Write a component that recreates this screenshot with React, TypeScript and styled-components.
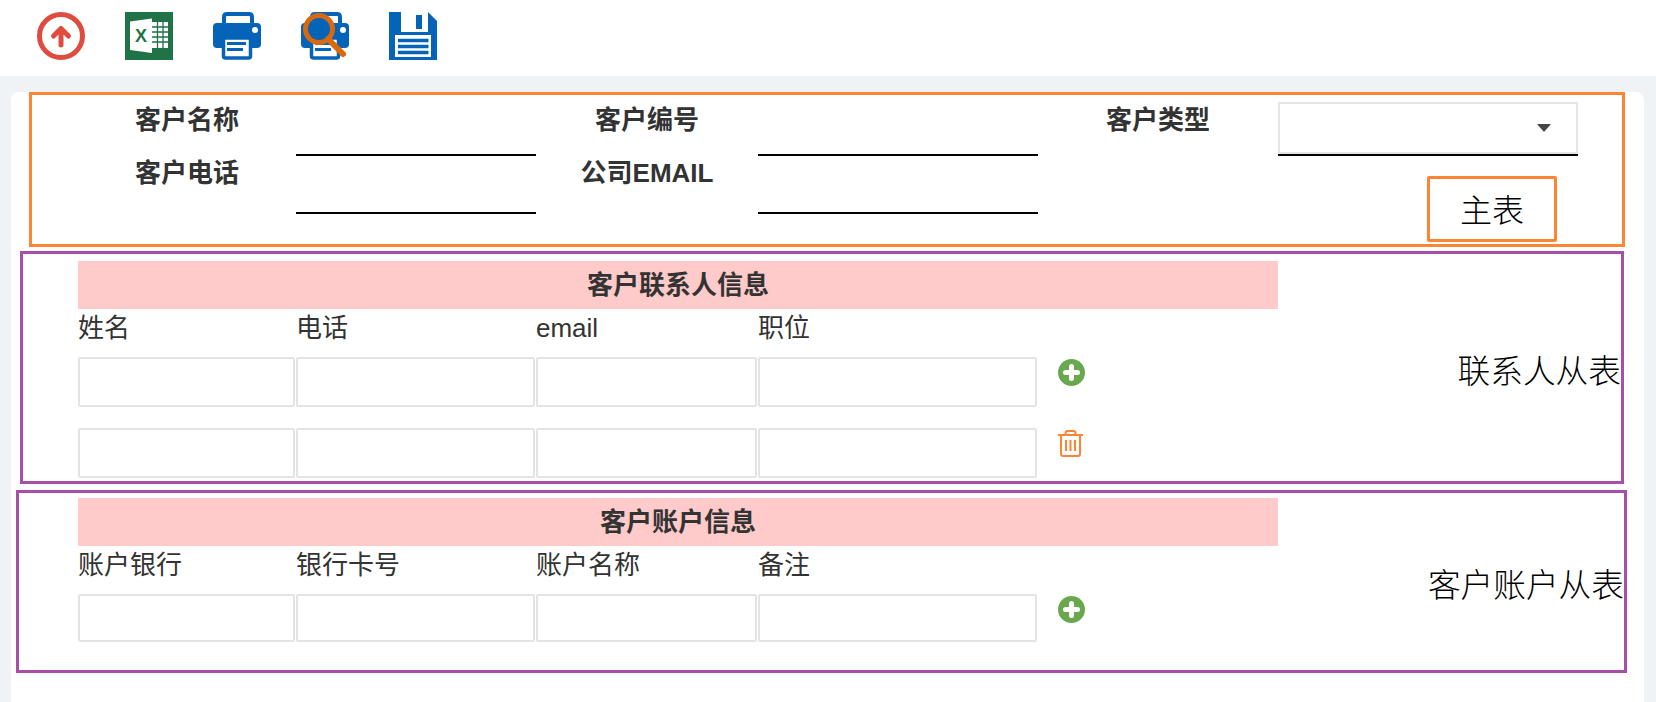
import { FC } from 'react';
import styled, { createGlobalStyle } from 'styled-components';

const contactLabels = ['姓名', '电话', 'email', '职位'];
const accountLabels = ['账户银行', '银行卡号', '账户名称', '备注'];

const UploadIcon: FC = () => (
  <svg width="48" height="48" viewBox="0 0 48 48" fill="none" stroke="#df4b3f">
    <circle cx="24" cy="24" r="21.5" strokeWidth="5" />
    <path d="M24 33V18M16.5 24L24 16.5L31.5 24" strokeWidth="5" strokeLinecap="round" strokeLinejoin="round" />
  </svg>
);

const ExcelIcon: FC = () => (
  <svg width="48" height="48" viewBox="0 0 48 48">
    <rect width="48" height="48" fill="#1f7346" />
    <path d="M27 10H43V36H27Z" fill="#fff" />
    <path d="M32.5 10V36M38 10V36M27 15H43M27 20H43M27 25H43M27 30H43" stroke="#1f7346" strokeWidth="1.3" />
    <path d="M5 9.5L27 6.5V41L5 38Z" fill="#fff" />
    <text x="16" y="30" textAnchor="middle" fontSize="18" fontWeight="700" fontFamily="Liberation Sans" fill="#1f7346">X</text>
  </svg>
);

const PrinterShape: FC = () => (
  <>
    <path d="M11 13V5Q11 2 14 2H36Q39 2 39 5V13" fill="none" stroke="#0563b8" strokeWidth="4" />
    <path d="M4 11H44Q48 11 48 15V32Q48 36 44 36H4Q0 36 0 32V15Q0 11 4 11Z" fill="#0563b8" />
    <circle cx="42" cy="18" r="3" fill="#fff" />
    <rect x="10.5" y="26" width="27" height="20" rx="2" fill="#fff" stroke="#0563b8" strokeWidth="3.5" />
    <path d="M14 31.5H33M14 37.5H30" stroke="#0563b8" strokeWidth="3" />
  </>
);

const PrinterIcon: FC = () => (
  <svg width="48" height="48" viewBox="0 0 48 48">
    <PrinterShape />
  </svg>
);

const PrintPreviewIcon: FC = () => (
  <svg width="48" height="48" viewBox="0 0 48 48">
    <PrinterShape />
    <circle cx="18" cy="17" r="13.5" fill="#0563b8" stroke="#d9690f" strokeWidth="5" />
    <path d="M27 27L42 42" stroke="#d9690f" strokeWidth="6" strokeLinecap="round" />
  </svg>
);

const SaveIcon: FC = () => (
  <svg width="48" height="48" viewBox="0 0 48 48">
    <path d="M0 0H39L48 9V48H0Z" fill="#0563b8" />
    <rect x="12" y="0" width="27" height="20" fill="#fff" />
    <rect x="27" y="3" width="6" height="14" fill="#0563b8" />
    <rect x="6" y="23" width="36" height="22" fill="#fff" />
    <path d="M9 28.5H39.5M9 34.5H39.5M9 40.5H39.5" stroke="#0563b8" strokeWidth="3.4" />
  </svg>
);

const AddIcon: FC = () => (
  <svg width="27" height="27" viewBox="0 0 27 27">
    <circle cx="13.5" cy="13.5" r="13.5" fill="#6aa84f" />
    <path d="M13.5 7.5V19.5M7.5 13.5H19.5" stroke="#fff" strokeWidth="5" strokeLinecap="round" />
  </svg>
);

const TrashIcon: FC = () => (
  <svg width="25" height="27" viewBox="0 0 25 27" fill="none" stroke="#ff8533" strokeWidth="2">
    <path d="M0 5H25M3 5V24Q3 26 5 26H20Q22 26 22 24V5M7.5 5V3Q7.5 1 9.5 1H15.5Q17.5 1 17.5 3V5" />
    <path d="M8 10V21M12.5 10V21M17 10V21" />
  </svg>
);

const App: FC = () => (
  <Page>
    <GlobalStyle />
    <Toolbar>
      <UploadIcon />
      <ExcelIcon />
      <PrinterIcon />
      <PrintPreviewIcon />
      <SaveIcon />
    </Toolbar>
    <Main>
      <Card>
        <MasterSection>
          <MasterGrid>
            <FieldLabel>客户名称</FieldLabel>
            <UnderlineInput />
            <FieldLabel>客户编号</FieldLabel>
            <UnderlineInput />
            <FieldLabel>客户类型</FieldLabel>
            <SelectBox />
            <FieldLabel $second>客户电话</FieldLabel>
            <UnderlineInput />
            <FieldLabel $second>公司EMAIL</FieldLabel>
            <UnderlineInput />
            <MasterTag>主表</MasterTag>
          </MasterGrid>
        </MasterSection>

        <DetailSection $offset={9} $width={1604} $height={233} $top={4} $inset={55} $pad={7}>
          <DetailTable>
            <SectionTitle>客户联系人信息</SectionTitle>
            { contactLabels.map(x => <ColumnLabel key={x}>{ x }</ColumnLabel>) }
            <span />
            <CellInput />
            <CellInput />
            <CellInput />
            <CellInput />
            <ActionCell><AddIcon /></ActionCell>
            <CellInput />
            <CellInput />
            <CellInput />
            <CellInput />
            <ActionCell><TrashIcon /></ActionCell>
          </DetailTable>
          <SectionNote $top={91}>联系人从表</SectionNote>
        </DetailSection>

        <DetailSection $offset={5} $width={1611} $height={183} $top={6} $inset={59} $pad={5}>
          <DetailTable>
            <SectionTitle>客户账户信息</SectionTitle>
            { accountLabels.map(x => <ColumnLabel key={x}>{ x }</ColumnLabel>) }
            <span />
            <CellInput $short />
            <CellInput $short />
            <CellInput $short />
            <CellInput $short />
            <ActionCell><AddIcon /></ActionCell>
          </DetailTable>
          <SectionNote $top={68}>客户账户从表</SectionNote>
        </DetailSection>
      </Card>
    </Main>
  </Page>
);

const GlobalStyle = createGlobalStyle`
  html, body {
    margin: 0;
    padding: 0;
    background: #fff;
  }

  body {
    font-family: "Liberation Sans", "Noto Sans CJK SC", sans-serif;
    color: #333;
    overflow: hidden;
  }
`;

const Page = styled.div`
  display: flex;
  flex-direction: column;
  height: 702px;
`;

const Toolbar = styled.div`
  display: flex;
  align-items: center;
  gap: 40px;
  height: 76px;
  padding: 0 0 4px 37px;
  box-sizing: border-box;
  background: #fff;

  svg {
    display: block;
  }
`;

const Main = styled.div`
  display: flex;
  flex-grow: 1;
  padding: 16px 12px 0 11px;
  background: #eff3f6;
`;

const Card = styled.div`
  flex-grow: 1;
  background: #fff;
  border-radius: 8px 8px 0 0;
`;

const MasterSection = styled.section`
  width: 1596px;
  height: 155px;
  margin-left: 18px;
  padding-left: 46px;
  box-sizing: border-box;
  border: 3px solid #ff8533;
`;

const MasterGrid = styled.div`
  display: grid;
  grid-template-columns: 218px 240px 222px 280px 240px 300px;
  grid-template-rows: 61px 58px;
`;

const FieldLabel = styled.div<{ $second?: boolean }>`
  margin-top: ${ props => props.$second ? 0 : 8 }px;
  font-size: 26px;
  font-weight: 700;
  line-height: 34px;
  text-align: center;
`;

const UnderlineInput = styled.input`
  width: 100%;
  height: 100%;
  padding: 0;
  box-sizing: border-box;
  border: 0;
  border-bottom: 2px solid #000;
  outline: none;
  background: transparent;
`;

const SelectBox = styled.div`
  position: relative;
  height: 52px;
  margin-top: 7px;
  box-sizing: border-box;
  border: 2px solid #e6e6e6;
  box-shadow: 0 2px 0 #000;

  &::after {
    content: '';
    position: absolute;
    top: 20px;
    right: 25px;
    border-top: 8px solid #444;
    border-left: 7px solid transparent;
    border-right: 7px solid transparent;
  }
`;

const MasterTag = styled.div`
  grid-column: 6;
  justify-self: end;
  width: 130px;
  height: 66px;
  margin: 20px 21px 0 0;
  box-sizing: border-box;
  border: 3px solid #ff8533;
  border-radius: 2px;
  color: #000;
  font-family: "Liberation Serif", "Noto Sans CJK SC", serif;
  font-size: 32px;
  font-weight: 300;
  line-height: 64px;
  text-align: center;
`;

interface DetailSectionStyleProps {
  $offset: number;
  $width: number;
  $height: number;
  $top: number;
  $inset: number;
  $pad: number;
}

const DetailSection = styled.section<DetailSectionStyleProps>`
  display: flex;
  width: ${ props => props.$width }px;
  height: ${ props => props.$height }px;
  margin: ${ props => props.$top }px 0 0 ${ props => props.$offset }px;
  padding: ${ props => props.$pad }px 0 0 ${ props => props.$inset }px;
  box-sizing: border-box;
  border: 3px solid #a64ea8;
`;

const DetailTable = styled.div`
  display: grid;
  flex-shrink: 0;
  grid-template-columns: 218px 240px 222px 280px 240px;
  grid-auto-rows: min-content;
  width: 1200px;
`;

const SectionTitle = styled.h2`
  grid-column: 1 / -1;
  margin: 0;
  height: 48px;
  background: #ffcaca;
  font-size: 26px;
  font-weight: 700;
  line-height: 48px;
  text-align: center;
`;

const ColumnLabel = styled.div`
  height: 48px;
  font-size: 26px;
  line-height: 38px;
`;

const CellInput = styled.input<{ $short?: boolean }>`
  width: calc(100% - 1px);
  height: ${ props => props.$short ? 48 : 50 }px;
  margin-bottom: 21px;
  padding: 0;
  box-sizing: border-box;
  border: 2px solid #e4e4e4;
  border-radius: 2px;
  outline: none;
  background: #fff;
`;

const ActionCell = styled.div`
  padding: 2px 0 0 20px;

  svg {
    display: block;
  }
`;

const SectionNote = styled.div<{ $top: number }>`
  margin: ${ props => props.$top }px 0 0 auto;
  color: #000;
  font-family: "Liberation Serif", "Noto Sans CJK SC", serif;
  font-size: 32.7px;
  font-weight: 300;
  line-height: 40px;
  white-space: nowrap;
`;

export default App;
